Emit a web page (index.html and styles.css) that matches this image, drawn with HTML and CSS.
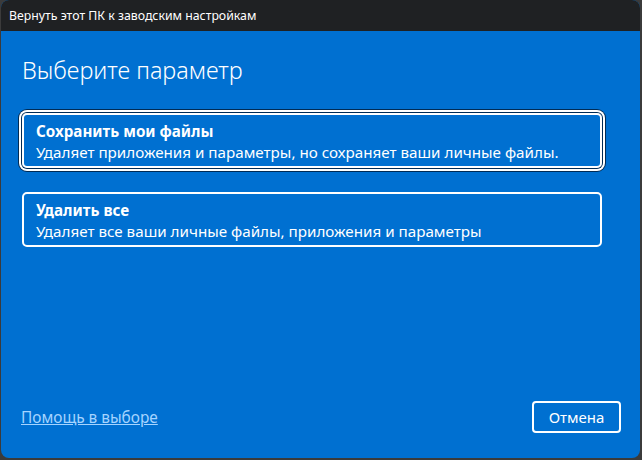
FILE: index.html
```html
<!DOCTYPE html>
<html lang="ru">
<head>
<meta charset="utf-8">
<title>Вернуть этот ПК к заводским настройкам</title>
<link rel="stylesheet" href="styles.css">
</head>
<body>
<div class="window">
  <div class="titlebar">Вернуть этот ПК к заводским настройкам</div>
  <div class="content">
    <h1 class="heading">Выберите параметр</h1>
    <div class="options">
      <div class="option focused">
        <div class="option-title">Сохранить мои файлы</div>
        <div class="option-desc">Удаляет приложения и параметры, но сохраняет ваши личные файлы.</div>
      </div>
      <div class="option">
        <div class="option-title">Удалить все</div>
        <div class="option-desc">Удаляет все ваши личные файлы, приложения и параметры</div>
      </div>
    </div>
    <div class="footer">
      <a class="help-link" href="#">Помощь в выборе</a>
      <button class="cancel">Отмена</button>
    </div>
  </div>
</div>
</body>
</html>
```
FILE: styles.css
```css
html, body {
  margin: 0;
  padding: 0;
  width: 642px;
  height: 460px;
  background: #3b3b3b;
  overflow: hidden;
}
body {
  font-family: "Noto Sans", "Open Sans", sans-serif;
  color: #fff;
  padding: 0 2px 2px 1px;
  box-sizing: border-box;
}
.window {
  height: 458px;
  display: flex;
  flex-direction: column;
  border-radius: 8px;
  overflow: hidden;
  background: #0070d1;
}
.titlebar {
  height: 31px;
  flex: none;
  background: #1f2123;
  font-size: 12.3px;
  line-height: 31px;
  padding-left: 8px;
  color: #fff;
}
.content {
  flex: 1;
  display: flex;
  flex-direction: column;
  padding: 0 19px 25px 20px;
}
.heading {
  margin: 24px 0 0 1px;
  font-size: 23.4px;
  font-weight: 300;
  line-height: 30px;
  height: 30px;
}
.options {
  margin-top: 28px;
  display: flex;
  flex-direction: column;
  gap: 24px;
  width: 580px;
  margin-left: 1px;
}
.option {
  border: 2px solid #fff;
  border-radius: 5px;
  height: 55px;
  box-sizing: border-box;
  padding: 6px 11px 0 12px;
}
.option.focused {
  box-shadow: 0 0 0 1px #002b55, 0 0 0 3px #fff, 0 0 0 4px #002b55;
}
.option-title {
  font-weight: 700;
  font-size: 15.2px;
  line-height: 20px;
}
.option-desc {
  font-size: 15.2px;
  line-height: 20px;
  margin-top: 1px;
}
.footer {
  margin-top: auto;
  display: flex;
  align-items: center;
  justify-content: space-between;
}
.help-link {
  color: #a6d4ff;
  font-size: 15.4px;
  text-decoration: underline;
  margin-left: 0;
}
.cancel {
  width: 89px;
  height: 32px;
  border: 2px solid #fff;
  border-radius: 4px;
  background: transparent;
  color: #fff;
  font-family: inherit;
  font-size: 15px;
  padding: 0;
}
```
